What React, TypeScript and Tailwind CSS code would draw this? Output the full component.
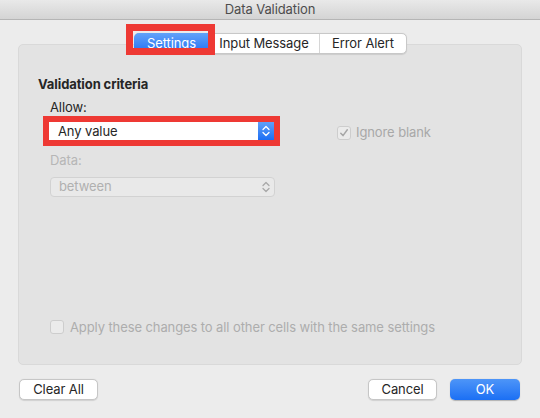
import React from "react";

const font = { fontFamily: "Inter, 'Liberation Sans', sans-serif" };

function Stepper({ disabled }: { disabled?: boolean }) {
  const c = disabled ? "#a9a9a9" : "#ffffff";
  return (
    <svg width="8" height="12" viewBox="0 0 8 12">
      <path d="M1 4.5 L4 1.5 L7 4.5" fill="none" stroke={c} strokeWidth="1.3" strokeLinecap="round" strokeLinejoin="round" />
      <path d="M1 7.5 L4 10.5 L7 7.5" fill="none" stroke={c} strokeWidth="1.3" strokeLinecap="round" strokeLinejoin="round" />
    </svg>
  );
}

function Check({ checked }: { checked?: boolean }) {
  return (
    <span className="w-[14px] h-[14px] rounded-[3px] border border-[#cdcdcd] bg-[#ebebeb] flex items-center justify-center shrink-0">
      {checked && (
        <svg width="10" height="10" viewBox="0 0 10 10">
          <path d="M1.8 5.2 L4 7.6 L8.3 1.8" fill="none" stroke="#a6a6a6" strokeWidth="1.5" strokeLinecap="round" strokeLinejoin="round" />
        </svg>
      )}
    </span>
  );
}

function Button({ children, primary, width }: { children: React.ReactNode; primary?: boolean; width: string }) {
  return (
    <button
      className={
        primary
          ? `${width} h-[21px] rounded-[5px] text-[13px] text-white bg-gradient-to-b from-[#4d95f8] to-[#1a6ff4] shadow-[0_0.5px_1px_rgba(0,0,0,0.25)]`
          : `${width} h-[21px] rounded-[5px] text-[13px] text-[#262626] bg-white border border-[#c6c6c6] shadow-[0_0.5px_1px_rgba(0,0,0,0.12)]`
      }
    >
      {children}
    </button>
  );
}

export default function App() {
  return (
    <div className="w-[540px] h-[418px] bg-[#ececec] flex flex-col text-[13px] text-[#262626] tracking-[-0.1px]" style={font}>
      {/* title bar */}
      <div className="h-[20px] shrink-0 bg-gradient-to-b from-[#e9e9e9] to-[#d4d4d4] border-b border-[#b5b5b5] flex items-center justify-center text-[13px] text-[#4d4d4d]">
        Data Validation
      </div>

      {/* tabs */}
      <div className="relative z-10 mt-[13px] -mb-[10px] flex justify-center pl-[1px]">
        <div className="flex h-[21px] rounded-[5px] bg-white border border-[#c8c8c8] shadow-[0_0.5px_1px_rgba(0,0,0,0.1)]">
          <div className="relative w-[75px] -my-px -ml-px flex items-center justify-center rounded-l-[5px] text-white bg-gradient-to-b from-[#62a2f8] to-[#1b6df4]">
            Settings
            <span className="absolute -left-[8px] -right-[6px] -top-[9px] -bottom-[1px] border-[7px] border-[#ee3934]" />
          </div>
          <div className="w-[111px] flex items-center justify-center border-r border-[#d6d6d6]">Input Message</div>
          <div className="w-[86px] flex items-center justify-center">Error Alert</div>
        </div>
      </div>

      {/* panel */}
      <div className="mx-[18px] h-[321px] shrink-0 rounded-[5px] bg-[#e3e3e3] border border-[#d9d9d9] flex flex-col pl-[19px] pt-[30px]">
        <div className="font-bold leading-[18px]">Validation criteria</div>

        <div className="mt-[6px] flex">
          <div className="pl-[12px] w-[299px]">
            <div className="leading-[16px]">Allow:</div>
            {/* red annotation frame */}
            <div className="mt-px -ml-[7px] w-[237px] border-[6px] border-[#ee3934] bg-white">
              <div className="h-[18px] bg-white rounded-[3px] flex items-center">
                <span className="flex-1 pl-[9px] leading-none">Any value</span>
                <span className="w-[16px] h-full bg-gradient-to-b from-[#5fa0f8] to-[#1b6ef4] flex items-center justify-center">
                  <Stepper />
                </span>
              </div>
            </div>
          </div>
          <div className="mt-[27px] flex items-center gap-[5px] h-[14px] text-[#a8a8a8]">
            <Check checked />
            <span>Ignore blank</span>
          </div>
        </div>

        <div className="pl-[12px] mt-[6px] leading-[16px] text-[#b6b6b6]">Data:</div>
        <div className="ml-[12px] mt-[9px] w-[225px] h-[20px] rounded-[4px] border border-[#d2d2d2] bg-[#e9e9e9] flex items-center text-[#b0b0b0]">
          <span className="flex-1 pl-[8px]">between</span>
          <span className="pr-[4px] flex items-center">
            <Stepper disabled />
          </span>
        </div>

        <div className="mt-auto mb-[27px] pl-[12px] flex items-center gap-[6px] text-[#adadad]">
          <Check />
          <span>Apply these changes to all other cells with the same settings</span>
        </div>
      </div>

      {/* buttons */}
      <div className="mt-[14px] px-[19px] pr-[20px] flex items-center">
        <Button width="w-[79px]">Clear All</Button>
        <div className="flex-1" />
        <Button width="w-[69px]">Cancel</Button>
        <div className="w-[13px]" />
        <Button width="w-[70px]" primary>
          OK
        </Button>
      </div>
    </div>
  );
}
